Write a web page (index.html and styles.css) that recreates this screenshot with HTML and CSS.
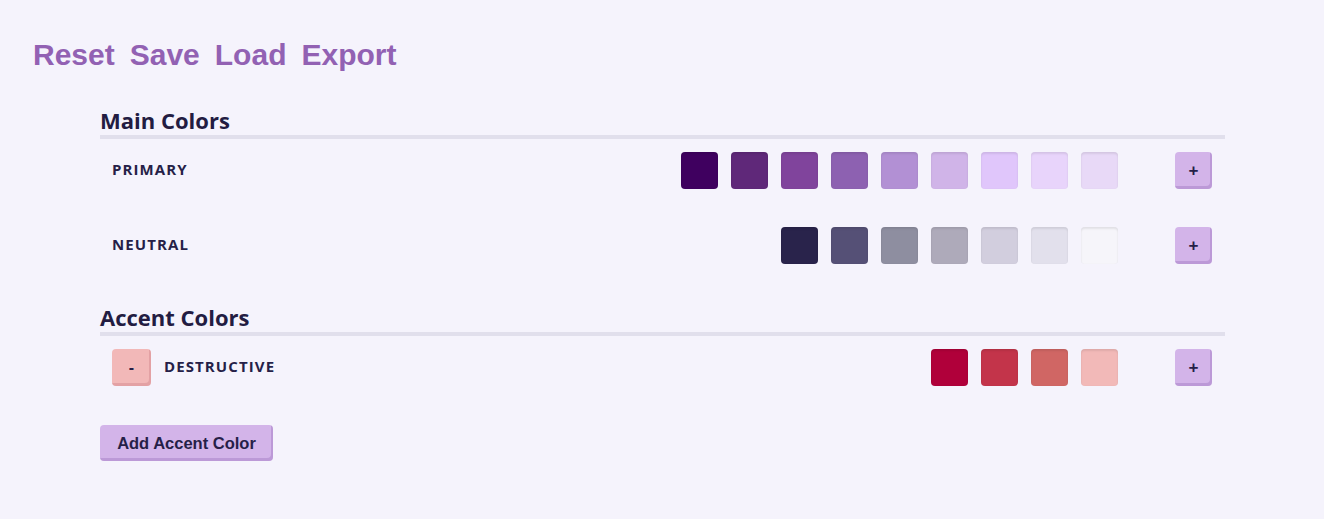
FILE: index.html
```html
<!DOCTYPE html>
<html>
<head>
<meta charset="utf-8">
<link rel="stylesheet" href="styles.css">
</head>
<body>
<header class="toolbar">
  <button class="tool">Reset</button>
  <button class="tool">Save</button>
  <button class="tool">Load</button>
  <button class="tool">Export</button>
</header>
<main class="panel">
  <section class="group">
    <h2 class="group-title">Main Colors</h2>
    <div class="row">
      <span class="label">PRIMARY</span>
      <div class="swatches">
        <span class="swatch" style="background:#3f005f"></span>
        <span class="swatch" style="background:#5f2879"></span>
        <span class="swatch" style="background:#80449c"></span>
        <span class="swatch" style="background:#8d61b1"></span>
        <span class="swatch" style="background:#b290d4"></span>
        <span class="swatch" style="background:#d0b4e8"></span>
        <span class="swatch" style="background:#e0c6fb"></span>
        <span class="swatch" style="background:#e8d4fb"></span>
        <span class="swatch" style="background:#e8d9f7"></span>
      </div>
      <button class="btn add">+</button>
    </div>
    <div class="row">
      <span class="label">NEUTRAL</span>
      <div class="swatches">
        <span class="swatch" style="background:#29234b"></span>
        <span class="swatch" style="background:#555076"></span>
        <span class="swatch" style="background:#8e8ea0"></span>
        <span class="swatch" style="background:#aeaaba"></span>
        <span class="swatch" style="background:#d2cede"></span>
        <span class="swatch" style="background:#e2e0ec"></span>
        <span class="swatch" style="background:#f6f5fa"></span>
      </div>
      <button class="btn add">+</button>
    </div>
  </section>
  <section class="group">
    <h2 class="group-title">Accent Colors</h2>
    <div class="row">
      <button class="btn remove">-</button>
      <span class="label">DESTRUCTIVE</span>
      <div class="swatches">
        <span class="swatch" style="background:#b0003a"></span>
        <span class="swatch" style="background:#c3344a"></span>
        <span class="swatch" style="background:#d06664"></span>
        <span class="swatch" style="background:#f2b9b8"></span>
      </div>
      <button class="btn add">+</button>
    </div>
  </section>
  <button class="btn add-accent">Add Accent Color</button>
</main>
</body>
</html>
```

FILE: styles.css
```css
html, body {
  margin: 0;
  padding: 0;
  background: #f5f3fc;
}

body {
  font-family: "Open Sans", "Noto Sans", sans-serif;
  color: #261f48;
}

.toolbar {
  display: flex;
  gap: 15px;
  padding: 38px 0 0 33px;
  height: 34px;
}

.tool {
  border: none;
  background: none;
  padding: 0;
  margin: 0;
  font-family: "Liberation Sans", Arial, sans-serif;
  font-weight: bold;
  font-size: 30px;
  line-height: 34px;
  color: #9261b3;
  cursor: pointer;
}

.panel {
  margin: 33px 0 0 100px;
  width: 1125px;
}

.group-title {
  margin: 0;
  font-size: 22px;
  line-height: 30px;
  font-weight: 700;
  color: #231c42;
  border-bottom: 4px solid #e1dfec;
}

.row {
  display: flex;
  align-items: center;
  height: 37px;
  margin: 13px 0 38px 0;
  padding: 0 13px 0 12px;
}

.label {
  font-size: 15px;
  font-weight: 700;
  letter-spacing: 1.1px;
  color: #261f48;
  margin-top: -3px;
}

.swatches {
  display: flex;
  gap: 13px;
  margin-left: auto;
}

.swatch {
  display: block;
  width: 37px;
  height: 37px;
  border-radius: 4px;
  box-shadow: inset 0 2px 2px rgba(0, 0, 0, 0.08), inset 0 0 1px rgba(0, 0, 0, 0.08);
}

.btn {
  border: none;
  border-radius: 4px;
  background: #d3b4e9;
  box-shadow: inset -2px -3px 0 rgba(110, 60, 150, 0.22);
  color: #261f48;
  font-family: "Liberation Sans", Arial, sans-serif;
  font-weight: bold;
  cursor: pointer;
  padding: 0;
}

.add {
  width: 37px;
  height: 37px;
  margin-left: 57px;
  font-size: 17px;
  line-height: 37px;
}

.remove {
  width: 39px;
  height: 37px;
  margin-right: 13px;
  background: #f2b8b8;
  box-shadow: inset -2px -3px 0 rgba(160, 60, 80, 0.18);
  font-size: 16px;
}

.add-accent {
  display: block;
  margin-top: 39px;
  width: 173px;
  height: 36px;
  font-size: 16.5px;
}
```
